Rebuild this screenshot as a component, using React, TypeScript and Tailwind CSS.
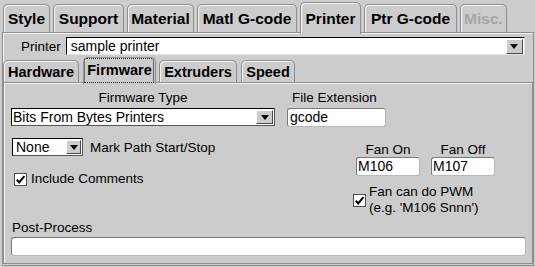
import React from "react";

function TopTab({ label, w, selected = false, disabled = false }: { label: string; w: string; selected?: boolean; disabled?: boolean }) {
  return (
    <div
      className={`${w} ${selected ? "h-[32px] -mb-[2px] pt-[7px] relative z-10" : "h-[28px] pt-[5px]"} bg-[#cccccc] border border-b-0 border-[#8e8e8e] rounded-t-[5px] shadow-[inset_1px_1px_0_#f4f4f4] flex justify-center text-[15.5px] font-bold leading-[18px] ${disabled ? "text-[#a6a6a6]" : "text-black"}`}
    >
      {label}
    </div>
  );
}

function SubTab({ label, w, selected = false }: { label: string; w: string; selected?: boolean }) {
  return (
    <div
      className={`${w} ${selected ? "h-[27px] -mb-[2px] pt-[4px] z-10" : "h-[22px] pt-[3px]"} relative bg-[#cccccc] border border-b-0 border-[#8e8e8e] rounded-t-[5px] shadow-[inset_1px_1px_0_#f4f4f4] flex justify-center text-[14.5px] font-bold leading-[17px] text-black`}
    >
      {selected && <span className="absolute left-0 right-[1px] top-0 bottom-[1px] border border-dotted border-black rounded-t-[3px]" />}
      {label}
    </div>
  );
}

function Arrow({ cls }: { cls: string }) {
  return (
    <span className={`${cls} bg-[#cccccc] border border-t-white border-l-white border-r-[#4a4a4a] border-b-[#4a4a4a] flex items-center justify-center shrink-0`}>
      <span className="w-0 h-0 border-l-[4px] border-r-[4px] border-t-[5px] border-l-transparent border-r-transparent border-t-black" />
    </span>
  );
}

function Check() {
  return (
    <span className="w-[13px] h-[13px] bg-white border border-[#4d4d4d] flex items-center justify-center shrink-0">
      <svg width="11" height="11" viewBox="0 0 11 11">
        <polyline points="1.8,5.6 4.2,8.4 9.4,2.2" fill="none" stroke="black" strokeWidth="2" />
      </svg>
    </span>
  );
}

function Entry({ cls, value = "", pl = "pl-[2px]" }: { cls: string; value?: string; pl?: string }) {
  return (
    <div className={`${cls} ${pl} h-[19px] bg-white rounded-[3px] border border-t-[#7a7a7a] border-l-[#7a7a7a] border-r-[#b8b8b8] border-b-[#b8b8b8] flex items-center text-[14px] leading-[17px]`}>
      {value}
    </div>
  );
}

export default function App() {
  return (
    <div className="w-[535px] h-[267px] bg-[#cccccc] overflow-hidden text-black font-['Liberation_Sans',Arial,sans-serif]">
      {/* top tabs */}
      <div className="flex items-end h-[32px] pl-[3px] gap-[3px]">
        <TopTab label="Style" w="w-[47px]" />
        <TopTab label="Support" w="w-[71px]" />
        <TopTab label="Material" w="w-[67px]" />
        <TopTab label="Matl G-code" w="w-[100px]" />
        <TopTab label="Printer" w="w-[61px]" selected />
        <TopTab label="Ptr G-code" w="w-[93px]" />
        <TopTab label="Misc." w="w-[47px]" disabled />
      </div>

      {/* main panel */}
      <div className="ml-[2px] w-[532px] h-[234px] border border-[#8e8e8e] shadow-[inset_1px_1px_0_#f4f4f4] flex flex-col">
        {/* printer row */}
        <div className="flex items-center h-[18px] mt-[4px] pl-[18px]">
          <span className="text-[13.5px] leading-[15px]">Printer</span>
          <div className="ml-[5px] w-[459px] h-[18px] bg-white border border-t-black border-l-black border-r-[#e6e6e6] border-b-[#e6e6e6] flex items-center">
            <span className="flex-1 pl-[4px] text-[14px] leading-[16px]">sample printer</span>
            <Arrow cls="w-[17px] h-[15px] mr-[1px]" />
          </div>
        </div>

        {/* sub tabs */}
        <div className="flex items-end h-[27px]">
          <SubTab label="Hardware" w="w-[76px]" />
          <div className="ml-[4px]">
            <SubTab label="Firmware" w="w-[73px]" selected />
          </div>
          <div className="ml-[3px]">
            <SubTab label="Extruders" w="w-[78px]" />
          </div>
          <div className="ml-[4px]">
            <SubTab label="Speed" w="w-[54px]" />
          </div>
        </div>

        {/* inner panel */}
        <div className="flex-1 mb-[1px] border border-[#8e8e8e] shadow-[inset_1px_1px_0_#f4f4f4] pl-[7px] flex flex-col">
          {/* row A */}
          <div className="flex mt-[7px]">
            <div className="w-[264px] flex flex-col">
              <span className="h-[15px] text-center text-[13.5px] leading-[15px]">Firmware Type</span>
              <div className="mt-[3px] h-[18px] bg-white border border-t-black border-l-black border-r-[#555] border-b-[#555] flex items-center">
                <span className="flex-1 pl-[1px] text-[14px] leading-[16px]">Bits From Bytes Printers</span>
                <Arrow cls="w-[17px] h-[14px] mr-[1px]" />
              </div>
            </div>
            <div className="ml-[12px] w-[99px] flex flex-col">
              <span className="h-[15px] pl-[5px] text-[13.5px] leading-[15px]">File Extension</span>
              <Entry cls="mt-[3px] w-[99px]" value="gcode" />
            </div>
          </div>

          {/* middle */}
          <div className="flex">
            <div className="w-[342px] flex flex-col">
              <div className="mt-[11px] flex items-center h-[18px]">
                <div className="ml-[1px] w-[71px] h-[18px] bg-white border border-t-black border-l-black border-r-[#555] border-b-[#555] flex items-center">
                  <span className="flex-1 pl-[3px] text-[14px] leading-[16px]">None</span>
                  <Arrow cls="w-[15px] h-[14px] mr-[1px]" />
                </div>
                <span className="ml-[7px] text-[13.5px] leading-[15px]">Mark Path Start/Stop</span>
              </div>
              <div className="mt-[15px] flex items-center h-[16px]">
                <span className="ml-[3px]">
                  <Check />
                </span>
                <span className="ml-[4px] text-[13.5px] leading-[16px]">Include Comments</span>
              </div>
            </div>

            <div className="flex flex-col">
              <div className="mt-[15px] ml-[3px] flex">
                <div className="w-[64px] flex flex-col">
                  <span className="h-[15px] text-center text-[13.5px] leading-[15px]">Fan On</span>
                  <Entry cls="w-[64px]" value="M106" pl="pl-[1px]" />
                </div>
                <div className="ml-[11px] w-[64px] flex flex-col">
                  <span className="h-[15px] text-center text-[13.5px] leading-[15px]">Fan Off</span>
                  <Entry cls="w-[64px]" value="M107" pl="pl-[1px]" />
                </div>
              </div>
              <div className="mt-[8px] flex items-center">
                <Check />
                <div className="ml-[3px] flex flex-col text-[13.5px] leading-[16px]">
                  <span>Fan can do PWM</span>
                  <span>(e.g. 'M106 Snnn')</span>
                </div>
              </div>
            </div>
          </div>

          {/* post process */}
          <span className="mt-[4px] ml-[1px] h-[15px] text-[13.5px] leading-[15px]">Post-Process</span>
          <Entry cls="mt-[2px] w-[515px]" />
        </div>
      </div>
    </div>
  );
}
